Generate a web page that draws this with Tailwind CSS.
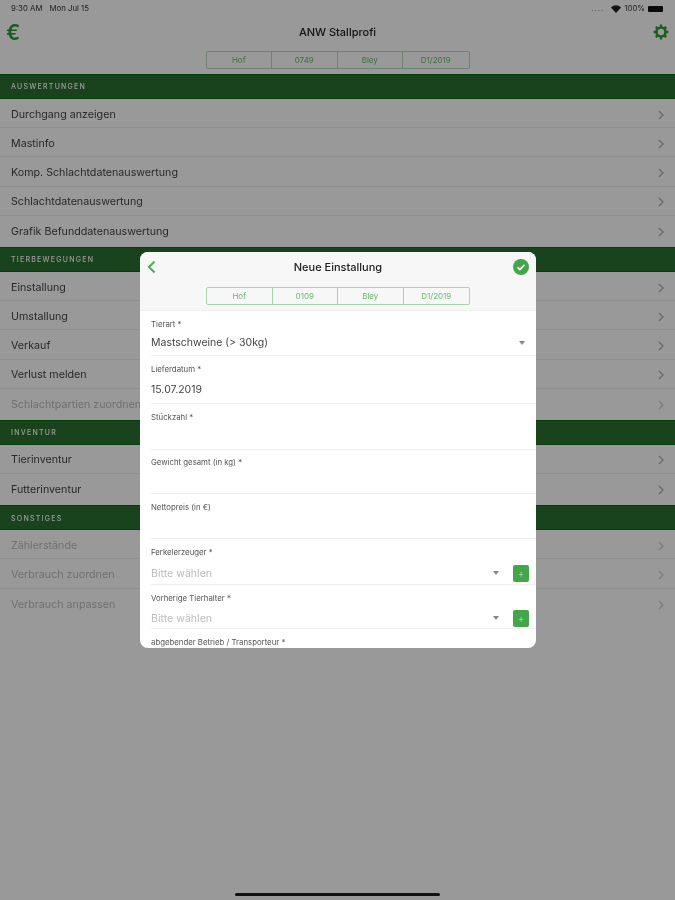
<!DOCTYPE html>
<html lang="de">

<head>
    <meta charset="utf-8">
    <title>ANW Stallprofi</title>
    <script src="https://cdn.jsdelivr.net/npm/@tailwindcss/browser@4"></script>
</head>

<body class="w-[675px] h-[900px] overflow-hidden bg-[#999]">
<div class="relative w-[675px] h-[900px] overflow-hidden bg-white font-['Inter',sans-serif] text-[#222] blur-[0.5px]">
    <!-- Status bar -->
    <div class="h-[16px] pl-[11px] pr-[12px] pt-[1px] flex justify-between items-center text-[7.8px] leading-none text-[#333]">
        <div class="flex gap-[7px]"><span>9:30 AM</span><span>Mon Jul 15</span></div>
        <div class="flex items-center gap-[3px]">
            <span class="mr-[4px] tracking-[1px] text-[#777]">....</span>
            <svg width="10" height="8" viewBox="0 0 10 8"><path d="M0 2.5C3 -.5 7 -.5 10 2.5L5 8z" fill="#222"/></svg>
            <span>100%</span>
            <span class="w-[15px] h-[6px] bg-[#111] rounded-[1px]"></span>
        </div>
    </div>

    <!-- Nav bar -->
    <div class="h-[58px] relative">
        <div class="h-[31px] pl-[6px] pr-[6px] pt-[1px] flex items-center justify-between">
            <span class="w-[16px] text-[21px] leading-none font-semibold text-[#2f9a36]">€</span>
            <span class="text-[11px] font-medium text-[#222]">ANW Stallprofi</span>
            <svg width="16" height="16" viewBox="0 0 16 16" fill="none" stroke="#2f9a36">
                <circle cx="8" cy="8" r="4.5" stroke-width="2.6"/>
                <path d="M8 .6v2.6M8 12.8v2.6M.6 8h2.6M12.8 8h2.6M2.8 2.8l1.8 1.8M11.4 11.4l1.8 1.8M2.8 13.2l1.8-1.8M11.4 4.6l1.8-1.8" stroke-width="2.4"/>
            </svg>
        </div>
        <div class="flex justify-center mt-[4px]">
            <div class="w-[264px] h-[18px] grid grid-cols-4 border border-[#bcd8be] rounded-[2px] text-[8px] text-[#66bb6a]">
                <div class="flex items-center justify-center border-r border-[#bcd8be]">Hof</div>
                <div class="flex items-center justify-center border-r border-[#bcd8be]">0749</div>
                <div class="flex items-center justify-center border-r border-[#bcd8be]">Bley</div>
                <div class="flex items-center justify-center">D1/2019</div>
            </div>
        </div>
    </div>

    <!-- Menu -->
    <div class="text-[10.7px] text-[#444]">
        <div class="h-[25px] px-[11px] pt-[1px] flex items-center bg-[#2a7030] border-y border-[#0d660d] text-[7px] font-medium tracking-[1.25px] text-white">AUSWERTUNGEN</div>
        <div class="pb-[2px]">
            <div class="h-[29.2px] pl-[11px] pr-[11px] pt-[3px] flex items-center justify-between border-b border-[#eee]"><span>Durchgang anzeigen</span><svg width="6" height="10" viewBox="0 0 6 10" fill="none" stroke="#aaa" stroke-width="1.2"><path d="M1 1l4 4-4 4"/></svg></div>
            <div class="h-[29.2px] pl-[11px] pr-[11px] pt-[3px] flex items-center justify-between border-b border-[#eee]"><span>Mastinfo</span><svg width="6" height="10" viewBox="0 0 6 10" fill="none" stroke="#aaa" stroke-width="1.2"><path d="M1 1l4 4-4 4"/></svg></div>
            <div class="h-[29.2px] pl-[11px] pr-[11px] pt-[3px] flex items-center justify-between border-b border-[#eee]"><span>Komp. Schlachtdatenauswertung</span><svg width="6" height="10" viewBox="0 0 6 10" fill="none" stroke="#aaa" stroke-width="1.2"><path d="M1 1l4 4-4 4"/></svg></div>
            <div class="h-[29.2px] pl-[11px] pr-[11px] pt-[3px] flex items-center justify-between border-b border-[#eee]"><span>Schlachtdatenauswertung</span><svg width="6" height="10" viewBox="0 0 6 10" fill="none" stroke="#aaa" stroke-width="1.2"><path d="M1 1l4 4-4 4"/></svg></div>
            <div class="h-[29.2px] pl-[11px] pr-[11px] pt-[3px] flex items-center justify-between"><span>Grafik Befunddatenauswertung</span><svg width="6" height="10" viewBox="0 0 6 10" fill="none" stroke="#aaa" stroke-width="1.2"><path d="M1 1l4 4-4 4"/></svg></div>
        </div>

        <div class="h-[25px] px-[11px] pt-[1px] flex items-center bg-[#2a7030] border-y border-[#0d660d] text-[7px] font-medium tracking-[1.25px] text-white">TIERBEWEGUNGEN</div>
        <div class="pb-[2px]">
            <div class="h-[29.2px] pl-[11px] pr-[11px] pt-[3px] flex items-center justify-between border-b border-[#eee]"><span>Einstallung</span><svg width="6" height="10" viewBox="0 0 6 10" fill="none" stroke="#aaa" stroke-width="1.2"><path d="M1 1l4 4-4 4"/></svg></div>
            <div class="h-[29.2px] pl-[11px] pr-[11px] pt-[3px] flex items-center justify-between border-b border-[#eee]"><span>Umstallung</span><svg width="6" height="10" viewBox="0 0 6 10" fill="none" stroke="#aaa" stroke-width="1.2"><path d="M1 1l4 4-4 4"/></svg></div>
            <div class="h-[29.2px] pl-[11px] pr-[11px] pt-[3px] flex items-center justify-between border-b border-[#eee]"><span>Verkauf</span><svg width="6" height="10" viewBox="0 0 6 10" fill="none" stroke="#aaa" stroke-width="1.2"><path d="M1 1l4 4-4 4"/></svg></div>
            <div class="h-[29.2px] pl-[11px] pr-[11px] pt-[3px] flex items-center justify-between border-b border-[#eee]"><span>Verlust melden</span><svg width="6" height="10" viewBox="0 0 6 10" fill="none" stroke="#aaa" stroke-width="1.2"><path d="M1 1l4 4-4 4"/></svg></div>
            <div class="h-[29.2px] pl-[11px] pr-[11px] pt-[3px] flex items-center justify-between text-[#bbb]"><span>Schlachtpartien zuordnen</span><svg width="6" height="10" viewBox="0 0 6 10" fill="none" stroke="#ccc" stroke-width="1.2"><path d="M1 1l4 4-4 4"/></svg></div>
        </div>

        <div class="h-[25px] px-[11px] pt-[2px] flex items-center bg-[#2a7030] border-y border-[#0d660d] text-[7px] font-medium tracking-[1.25px] text-white">INVENTUR</div>
        <div class="pb-[2px]">
            <div class="h-[29.2px] pl-[11px] pr-[11px] pt-[3px] flex items-center justify-between border-b border-[#eee]"><span>Tierinventur</span><svg width="6" height="10" viewBox="0 0 6 10" fill="none" stroke="#aaa" stroke-width="1.2"><path d="M1 1l4 4-4 4"/></svg></div>
            <div class="h-[29.2px] pl-[11px] pr-[11px] pt-[3px] flex items-center justify-between"><span>Futterinventur</span><svg width="6" height="10" viewBox="0 0 6 10" fill="none" stroke="#aaa" stroke-width="1.2"><path d="M1 1l4 4-4 4"/></svg></div>
        </div>

        <div class="h-[25px] px-[11px] pt-[2px] flex items-center bg-[#2a7030] border-y border-[#0d660d] text-[7px] font-medium tracking-[1.25px] text-white">SONSTIGES</div>
        <div class="text-[#bbb]">
            <div class="h-[29.2px] pl-[11px] pr-[11px] pt-[3px] flex items-center justify-between border-b border-[#eee]"><span>Zählerstände</span><svg width="6" height="10" viewBox="0 0 6 10" fill="none" stroke="#ccc" stroke-width="1.2"><path d="M1 1l4 4-4 4"/></svg></div>
            <div class="h-[29.2px] pl-[11px] pr-[11px] pt-[3px] flex items-center justify-between border-b border-[#eee]"><span>Verbrauch zuordnen</span><svg width="6" height="10" viewBox="0 0 6 10" fill="none" stroke="#ccc" stroke-width="1.2"><path d="M1 1l4 4-4 4"/></svg></div>
            <div class="h-[29.2px] pl-[11px] pr-[11px] pt-[3px] flex items-center justify-between"><span>Verbrauch anpassen</span><svg width="6" height="10" viewBox="0 0 6 10" fill="none" stroke="#ccc" stroke-width="1.2"><path d="M1 1l4 4-4 4"/></svg></div>
        </div>
    </div>

    <!-- Dim layer -->
    <div class="absolute inset-0 bg-black/40"></div>

    <!-- Home indicator -->
    <div class="absolute left-[235px] top-[893px] w-[205px] h-[3px] rounded-full bg-[#111]"></div>

    <!-- Modal -->
    <div class="absolute left-[140px] top-[252px] w-[396px] h-[396px] bg-white rounded-[8px] overflow-hidden">
        <div class="h-[59px] bg-[#f7f7f7] border-b border-[#eee]">
            <div class="h-[30px] pl-[7px] pr-[7px] flex items-center justify-between">
                <span class="w-[16px]"><svg width="9" height="14" viewBox="0 0 9 14" fill="none" stroke="#4caf50" stroke-width="2"><path d="M7.5 1.5L2 7l5.5 5.5"/></svg></span>
                <span class="text-[11px] font-medium text-[#222]">Neue Einstallung</span>
                <svg width="16" height="16" viewBox="0 0 16 16"><circle cx="8" cy="8" r="8" fill="#43a648"/><path d="M4.5 8.3l2.4 2.3 4.6-4.8" fill="none" stroke="#fff" stroke-width="1.6"/></svg>
            </div>
            <div class="flex justify-center mt-[5px]">
                <div class="w-[264px] h-[18px] grid grid-cols-4 border border-[#a5d6a7] rounded-[2px] text-[8px] text-[#66bb6a]">
                    <div class="flex items-center justify-center border-r border-[#a5d6a7]">Hof</div>
                    <div class="flex items-center justify-center border-r border-[#a5d6a7]">0109</div>
                    <div class="flex items-center justify-center border-r border-[#a5d6a7]">Bley</div>
                    <div class="flex items-center justify-center">D1/2019</div>
                </div>
            </div>
        </div>

        <div class="pl-[11px] text-[#555]">
            <div class="h-[45px] border-b border-[#eee] pr-[11px] pt-[8px]">
                <div class="text-[7.8px] leading-[10px]">Tierart *</div>
                <div class="mt-[4px] flex items-center justify-between text-[10.5px] leading-[20px] text-[#444]"><span>Mastschweine (&gt; 30kg)</span><span class="w-0 h-0 border-x-[3px] border-x-transparent border-t-[4px] border-t-[#888]"></span></div>
            </div>
            <div class="h-[48px] border-b border-[#eee] pt-[8px]">
                <div class="text-[7.8px] leading-[10px]">Lieferdatum *</div>
                <div class="mt-[6px] text-[10.5px] leading-[20px] text-[#444]">15.07.2019</div>
            </div>
            <div class="h-[46px] border-b border-[#eee] pt-[8px]">
                <div class="text-[7.8px] leading-[10px]">Stückzahl *</div>
            </div>
            <div class="h-[44px] border-b border-[#eee] pt-[7px]">
                <div class="text-[7.8px] leading-[10px]">Gewicht gesamt (in kg) *</div>
            </div>
            <div class="h-[45px] border-b border-[#eee] pt-[8px]">
                <div class="text-[7.8px] leading-[10px]">Nettopreis (in €)</div>
            </div>
            <div class="h-[46px] border-b border-[#eee] pr-[7px] pt-[8px]">
                <div class="text-[7.8px] leading-[10px]">Ferkelerzeuger *</div>
                <div class="mt-[5px] flex items-center justify-between text-[10.6px] leading-[20px] text-[#bbb]">
                    <span class="pt-[2px]">Bitte wählen</span>
                    <div class="flex items-center gap-[14px]">
                        <span class="w-0 h-0 border-x-[3px] border-x-transparent border-t-[4px] border-t-[#888]"></span>
                        <span class="w-[16px] h-[17px] rounded-[2px] bg-[#43a648] text-[#a5d6a7] text-[10px] leading-[17px] text-center">+</span>
                    </div>
                </div>
            </div>
            <div class="h-[44px] border-b border-[#eee] pr-[7px] pt-[8px]">
                <div class="text-[7.8px] leading-[10px]">Vorherige Tierhalter *</div>
                <div class="mt-[4px] flex items-center justify-between text-[10.6px] leading-[20px] text-[#bbb]">
                    <span class="pt-[2px]">Bitte wählen</span>
                    <div class="flex items-center gap-[14px]">
                        <span class="w-0 h-0 border-x-[3px] border-x-transparent border-t-[4px] border-t-[#888]"></span>
                        <span class="w-[16px] h-[17px] rounded-[2px] bg-[#43a648] text-[#a5d6a7] text-[10px] leading-[17px] text-center">+</span>
                    </div>
                </div>
            </div>
            <div class="pt-[8px] text-[7.8px] leading-[10px]">abgebender Betrieb / Transporteur *</div>
        </div>
    </div>
</div>
</body>

</html>
